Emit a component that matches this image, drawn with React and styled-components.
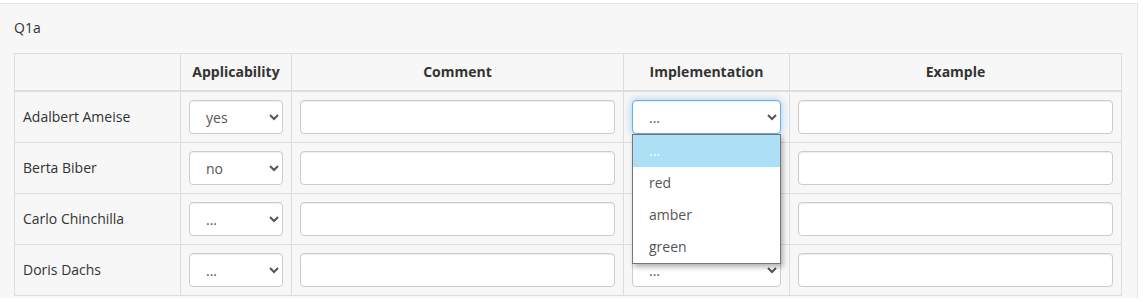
import React from 'react'
import styled, { createGlobalStyle } from 'styled-components'

const GlobalStyle = createGlobalStyle`
  html, body {
    margin: 0;
    padding: 0;
    background: #fff;
  }
  body {
    font-family: "Open Sans", "Liberation Sans", sans-serif;
    font-size: 14px;
    color: #333;
  }
`

const Panel = styled.div`
  margin: 3px 5px 0 0;
  background: #f7f7f7;
  border: 1px solid #e3e3e3;
  border-left: 0;
  border-bottom: 0;
  padding: 14px 15px 2px 14px;
`

const Title = styled.div`
  line-height: 20px;
  margin-bottom: 15px;
`

const Table = styled.table`
  border-collapse: collapse;
  table-layout: fixed;
  width: 1108px;
  background: #f7f7f7;
`

const HeadCell = styled.th`
  border: 1px solid #ddd;
  border-bottom-width: 2px;
  padding: 8px;
  line-height: 20px;
  font-weight: 700;
  text-align: ${p => (p.$left ? 'left' : 'center')};
  color: #333;
`

const Cell = styled.td`
  border: 1px solid #ddd;
  padding: 8px;
  height: 34px;
  vertical-align: middle;
  line-height: 20px;
`

const NameCell = styled(Cell)`
  color: #333;
`

const fieldBase = `
  display: block;
  width: 100%;
  height: 34px;
  box-sizing: border-box;
  border: 1px solid #ccc;
  border-radius: 4px;
  background: #fff;
  font-family: "Open Sans", "Liberation Sans", sans-serif;
  font-size: 14px;
  color: #555;
  box-shadow: inset 0 1px 1px rgba(0, 0, 0, 0.075);
  outline: none;
`

const TextInput = styled.input`
  ${fieldBase}
  padding: 6px 12px;
`

const Select = styled.select`
  ${fieldBase}
  padding: 6px 8px 6px 12px;
  ${p =>
    p.$focused &&
    `
    border-color: #66afe9;
    box-shadow: inset 0 1px 1px rgba(0, 0, 0, .075), 0 0 8px rgba(102, 175, 233, .6);
  `}
`

const SelectWrap = styled.div`
  position: relative;
`

const OptionList = styled.div`
  position: absolute;
  top: 100%;
  left: 0;
  right: 0;
  z-index: 10;
  background: #fff;
  border: 1px solid #767676;
  box-shadow: 2px 3px 5px rgba(0, 0, 0, 0.3);
`

const OptionItem = styled.div`
  height: 32px;
  line-height: 32px;
  padding-left: 16px;
  font-size: 14px;
  color: ${p => (p.$active ? '#fff' : '#555')};
  background: ${p => (p.$active ? '#ade0f5' : '#fff')};
`

const people = [
  { name: 'Adalbert Ameise', applicability: 'yes' },
  { name: 'Berta Biber', applicability: 'no' },
  { name: 'Carlo Chinchilla', applicability: '...' },
  { name: 'Doris Dachs', applicability: '...' },
]

const applicabilityOptions = ['...', 'yes', 'no']
const implementationOptions = ['...', 'red', 'amber', 'green']

const App = () => {
  return (
    <>
      <GlobalStyle />
      <Panel>
        <Title>Q1a</Title>
        <Table>
          <colgroup>
            <col style={{ width: 166 }} />
            <col style={{ width: 111 }} />
            <col style={{ width: 332 }} />
            <col style={{ width: 166 }} />
            <col style={{ width: 332 }} />
          </colgroup>
          <thead>
            <tr>
              <HeadCell $left></HeadCell>
              <HeadCell>Applicability</HeadCell>
              <HeadCell>Comment</HeadCell>
              <HeadCell>Implementation</HeadCell>
              <HeadCell>Example</HeadCell>
            </tr>
          </thead>
          <tbody>
            {people.map((p, i) => (
              <tr key={p.name}>
                <NameCell>{p.name}</NameCell>
                <Cell>
                  <Select defaultValue={p.applicability}>
                    {applicabilityOptions.map(o => (
                      <option key={o} value={o}>{o}</option>
                    ))}
                  </Select>
                </Cell>
                <Cell>
                  <TextInput type="text" />
                </Cell>
                <Cell>
                  <SelectWrap>
                    <Select defaultValue="..." $focused={i === 0}>
                      {implementationOptions.map(o => (
                        <option key={o} value={o}>{o}</option>
                      ))}
                    </Select>
                    {i === 0 && (
                      <OptionList>
                        {implementationOptions.map(o => (
                          <OptionItem key={o} $active={o === '...'}>{o}</OptionItem>
                        ))}
                      </OptionList>
                    )}
                  </SelectWrap>
                </Cell>
                <Cell>
                  <TextInput type="text" />
                </Cell>
              </tr>
            ))}
          </tbody>
        </Table>
      </Panel>
    </>
  )
}

export default App
